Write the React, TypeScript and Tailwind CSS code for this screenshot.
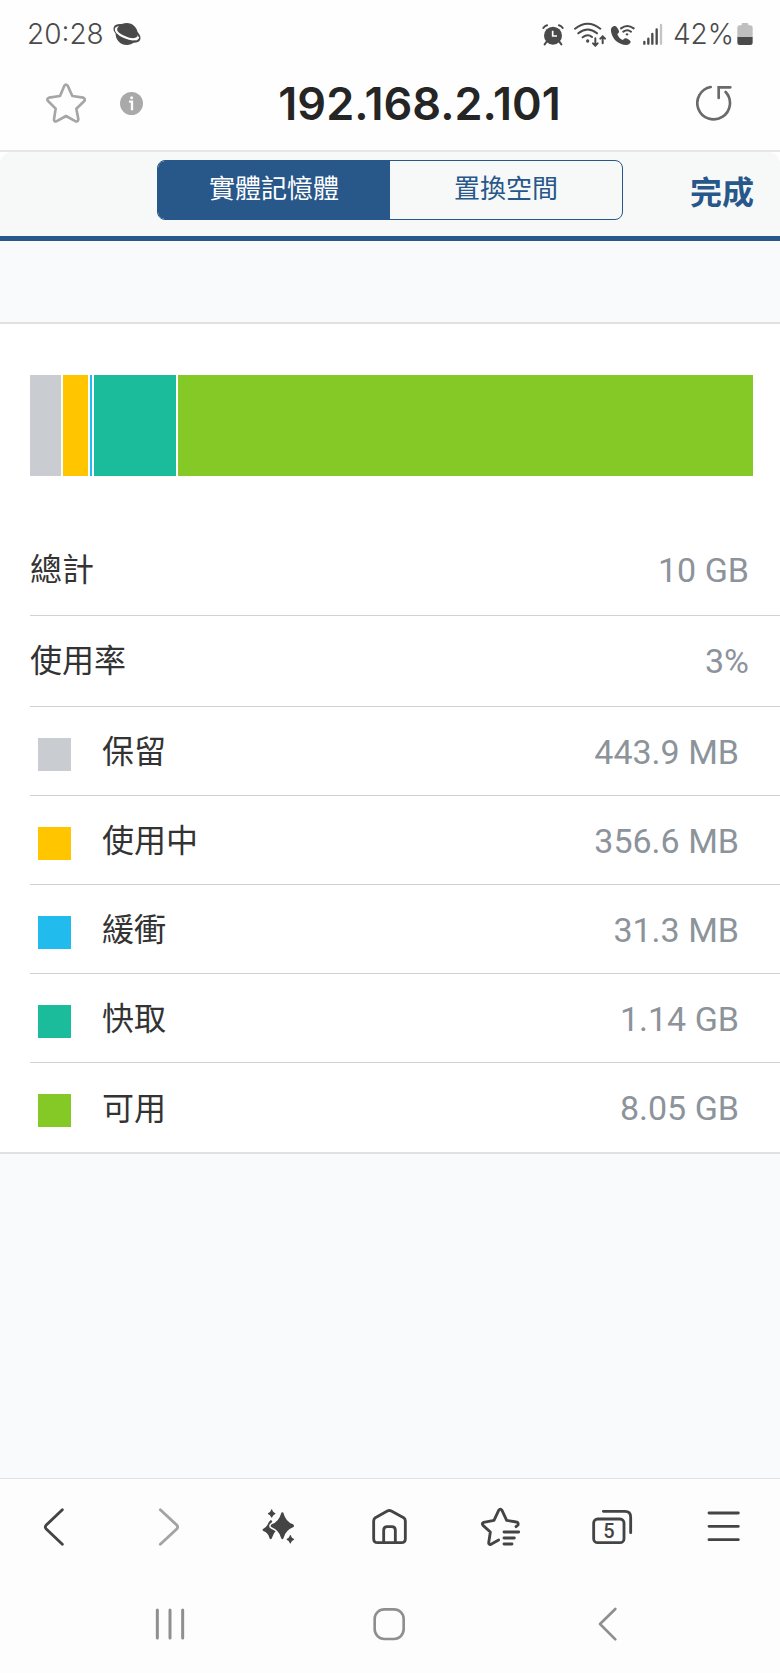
import { useState } from "react";
import type { ReactNode } from "react";

const memory = [
  { label: "保留", value: "443.9 MB", mb: 443.9, color: "bg-[#c9ccd1]" },
  { label: "使用中", value: "356.6 MB", mb: 356.6, color: "bg-[#ffc600]" },
  { label: "緩衝", value: "31.3 MB", mb: 31.3, color: "bg-[#22bbee]" },
  { label: "快取", value: "1.14 GB", mb: 1167, color: "bg-[#1abc9c]" },
  { label: "可用", value: "8.05 GB", mb: 8243, color: "bg-[#84c926]" },
];

const tabs = ["實體記憶體", "置換空間"];

function StatusBar() {
  return (
    <div className="flex h-[68px] items-center pr-[27px] pl-[27px] text-[28px] text-[#4a4a4a]">
      <span className="font-light">20:28</span>
      <svg className="ml-2 h-6 w-[30px]" viewBox="334 66 90 72" fill="none">
        <circle cx="378" cy="102" r="33" fill="#4a4a4a" />
        <ellipse
          cx="379"
          cy="100"
          rx="41"
          ry="19"
          transform="rotate(27 379 100)"
          stroke="#4a4a4a"
          strokeWidth="6"
        />
        <path
          d="M346 86c-3 16 48 42 66 27"
          stroke="#fff"
          strokeWidth="7"
          strokeLinecap="round"
        />
      </svg>
      <div className="ml-auto flex items-center">
        <svg className="h-[23px] w-[22px]" viewBox="66 66 66 69" fill="none">
          <circle cx="99" cy="104" r="27" fill="#4a4a4a" />
          <path
            d="M70 81q4-6 11-8M128 81q-4-6-11-8M80 122l-6 8M118 122l6 8"
            stroke="#4a4a4a"
            strokeWidth="6"
            strokeLinecap="round"
          />
          <path d="M98 89v16h13" stroke="#fff" strokeWidth="5" />
        </svg>
        <svg
          className="ml-2.5 h-[26px] w-[33px]"
          viewBox="162 60 99 78"
          fill="none"
          stroke="#4a4a4a"
          strokeWidth="6"
          strokeLinecap="round"
        >
          <path d="M165 83q38-30 76 0M175 97q28-23 56 0M188 109q15-12 28-1" />
          <circle cx="203" cy="120" r="2" fill="#4a4a4a" />
          <path d="M226 112v21M219 127l7 7 7-7M248 127v-21M241 113l7-7 7 7" />
        </svg>
        <svg
          className="ml-[3px] h-[23px] w-[26px]"
          viewBox="270 66 78 69"
          fill="none"
        >
          <path
            d="M285 75c-9 0-13 7-12 16 3 23 22 41 46 41 7 0 11-4 13-9 1-4-13-13-17-11l-7 5c-8-3-13-9-16-17l5-6c2-4-7-19-12-19Z"
            fill="#4a4a4a"
          />
          <path
            d="M303 82q19-14 38 0M310 92q12-9 23 0"
            stroke="#4a4a4a"
            strokeWidth="6"
            strokeLinecap="round"
          />
          <circle cx="321" cy="100" r="3.5" fill="#4a4a4a" />
        </svg>
        <svg
          className="ml-1.5 h-[23px] w-[21px]"
          viewBox="366 66 63 69"
          stroke="#4a4a4a"
          strokeWidth="7"
          strokeLinecap="round"
        >
          <path d="M373 128v-5M385 128v-15M397 128v-29M410 128v-43" />
          <path d="M423 128v-56" stroke="#c4c4c4" />
        </svg>
        <span className="ml-2.5 font-light">42%</span>
        <svg className="ml-0.5 h-6 w-[17px]" viewBox="648 66 51 72">
          <path
            d="M665 73q0-4 4-4h12q4 0 4 4v3h5q8 0 8 8v28h-46V84q0-8 8-8h5Z"
            fill="#bfbfbf"
          />
          <path d="M652 111h46v17q0 7-7 7h-32q-7 0-7-7Z" fill="#4a4a4a" />
        </svg>
      </div>
    </div>
  );
}

function AddressBar() {
  return (
    <div className="flex h-[82px] items-start pr-12 pl-[46px]">
      <div className="flex h-[70px] w-full items-center">
        <button aria-label="加入書籤">
          <svg className="h-10 w-10" viewBox="137 250 120 120" fill="none">
            <path
              d="M192 258q5-7 10 0l14 31 33 5q7 3 3 10l-24 23 6 32q-1 8-8 6l-29-16-29 16q-7 2-7-6l5-32-23-23q-5-7 3-10l33-5Z"
              stroke="#a6a6a6"
              strokeWidth="8"
              strokeLinejoin="round"
            />
          </svg>
        </button>
        <button aria-label="網站資訊" className="ml-[34px]">
          <svg className="h-[23px] w-[23px]" viewBox="360 276 69 69" fill="none">
            <circle cx="394.500" cy="310.500" r="34.500" fill="#a9a9a9" />
            <circle cx="395" cy="293" r="4.500" fill="#fff" />
            <path d="M387 305h9v26" stroke="#fff" strokeWidth="7" />
          </svg>
        </button>
        <button className="flex-1 pt-0.5 text-center text-[45px] font-semibold text-[#252525]">
          192.168.2.101
        </button>
        <button aria-label="重新整理">
          <svg className="h-9 w-9" viewBox="529 255 108 108" fill="none">
            <path
              d="M573 261A49 49 0 1 0 618 276M597 294v-32h35"
              stroke="#6a6a6a"
              strokeWidth="8"
              strokeLinecap="round"
            />
          </svg>
        </button>
      </div>
    </div>
  );
}

function Header() {
  const [active, setActive] = useState(0);
  return (
    <header className="border-t-2 border-[#e6e6e6] bg-white">
      <div className="grid h-[89px] grid-cols-[1fr_3fr_1fr] items-start rounded-t-xl border-b-[5px] border-[#28578a] bg-[#f7f9f9] pt-2">
        <div className="col-start-2 mx-px grid h-[60px] grid-cols-2 overflow-hidden rounded-lg border border-[#28578a]">
          {tabs.map((tab, i) => (
            <button
              key={tab}
              onClick={() => setActive(i)}
              className={
                active === i
                  ? "bg-[#28578a] pb-0.5 text-[26px] text-white"
                  : "pb-0.5 text-[26px] text-[#28578a]"
              }
            >
              {tab}
            </button>
          ))}
        </div>
        <button className="h-[66px] justify-self-end pr-[26px] text-[32px] font-bold text-[#28578a]">
          完成
        </button>
      </div>
    </header>
  );
}

function MemoryPanel() {
  return (
    <section className="border-y-2 border-[#dfe1e3] bg-white">
      <div className="mt-[51px] mr-[27px] ml-[30px] flex h-[101px] gap-0.5">
        {memory.map((m) => (
          <div
            key={m.label}
            className={`basis-0 ${m.color}`}
            style={{ flexGrow: m.mb }}
          />
        ))}
      </div>
      <dl className="mt-[49px] ml-[30px] text-[32px]">
        <div className="flex h-[91px] items-center justify-between border-b border-[#d0d3d6] pr-[31px]">
          <dt className="text-[#333]">總計</dt>
          <dd className="text-[34px] text-[#8c939b]">10 GB</dd>
        </div>
        <div className="flex h-[91px] items-center justify-between border-b border-[#d0d3d6] pr-[31px]">
          <dt className="text-[#333]">使用率</dt>
          <dd className="text-[34px] text-[#8c939b]">3%</dd>
        </div>
        {memory.map((m) => (
          <div
            key={m.label}
            className="flex h-[89px] items-center border-b border-[#d0d3d6] pt-0.5 pr-[41px] pl-2 last:border-b-0"
          >
            <dt className="flex items-center gap-[31px] text-[#333]">
              <span className={`mt-1 size-[33px] ${m.color}`} />
              {m.label}
            </dt>
            <dd className="ml-auto text-[34px] text-[#8c939b]">{m.value}</dd>
          </div>
        ))}
      </dl>
    </section>
  );
}

function ToolButton({
  label,
  box,
  children,
}: {
  label: string;
  box: string;
  children: ReactNode;
}) {
  return (
    <button aria-label={label} className="flex justify-center">
      <svg
        className="h-[42px] w-[42px]"
        viewBox={box}
        fill="none"
        stroke="#444"
        strokeWidth="8.5"
        strokeLinecap="round"
        strokeLinejoin="round"
      >
        {children}
      </svg>
    </button>
  );
}

function Toolbar() {
  return (
    <nav className="grid h-[96px] grid-cols-7 items-center border-t border-[#dfe1e3] bg-[#fdfdfd]">
      <ToolButton label="上一頁" box="104 48 126 126">
        <path d="M186 59l-49 47q-4 5 0 10l49 47" />
      </ToolButton>
      <ToolButton label="下一頁" box="438 48 126 126">
        <path d="M481 59l50 47q4 5 0 10l-50 47" stroke="#a3a3a3" />
      </ToolButton>
      <ToolButton label="瀏覽助理" box="773 48 126 126">
        <g fill="#444" stroke="none">
          <path d="M811 90q5 1 5 6l-7 8q-1 6 6 11l15 5q-11 8-15 23-4 9-8 0-4-15-18-20-5-4 0-7 12-6 16-19Z" />
          <path
            d="M846 67q3 0 4 4 6 23 28 32 6 5 0 9-22 9-28 31-4 9-8 0-6-22-28-31-6-4 0-9 22-9 28-32 1-4 4-4Z"
            stroke="#fdfdfd"
            strokeWidth="9"
            paintOrder="stroke"
          />
          <path d="M814 58q2 0 2 3 2 6 8 8 3 2 0 4-6 2-8 8-2 5-4 0-2-6-8-8-3-2 0-4 6-2 8-8 0-3 2-3Z" />
          <path d="M870 135q2 0 2 3 2 6 8 8 3 2 0 4-6 2-8 8-2 5-4 0-2-6-8-8-3-2 0-4 6-2 8-8 0-3 2-3Z" />
        </g>
      </ToolButton>
      <ToolButton label="首頁" box="386 48 126 126">
        <path d="M400 93q0-6 5-10l36-20q6-3 12 0l37 20q5 4 5 10v53q0 12-12 12h-71q-12 0-12-12ZM430 157v-36q0-11 11-11h13q11 0 11 11v36" />
      </ToolButton>
      <ToolButton label="書籤" box="720 48 126 126">
        <path d="M828 110l6-5q2-8-5-9l-29-5-14-30q-5-7-10 0l-14 30-31 6q-7 3-2 9l22 20-5 33q1 6 7 4l23-13M792 126h44M792 144h31M792 162h24" />
      </ToolButton>
      <ToolButton label="分頁" box="336 48 126 126">
        <path d="M370 64h65q17 0 17 17v47" />
        <rect x="341" y="87" width="91" height="71" rx="12" />
        <text
          x="387"
          y="143"
          textAnchor="middle"
          fontSize="60"
          fontWeight="500"
          fill="#444"
          stroke="none"
        >
          5
        </text>
      </ToolButton>
      <ToolButton label="選單" box="669 48 126 126">
        <path d="M687 69h88M687 109h88M687 149h88" />
      </ToolButton>
    </nav>
  );
}

function SystemNav() {
  return (
    <nav className="grid h-[99px] grid-cols-3 items-center bg-[#fdfdfd] px-[60px]">
      <button aria-label="最近使用" className="flex justify-center">
        <svg
          className="h-9 w-9"
          viewBox="457 347 108 108"
          stroke="#8f8f8f"
          strokeWidth="9"
          strokeLinecap="round"
        >
          <path d="M473 359v84M511 359v84M549 359v84" />
        </svg>
      </button>
      <button aria-label="主畫面" className="flex justify-center">
        <svg
          className="h-9 w-9"
          viewBox="394 347 108 108"
          fill="none"
          stroke="#8f8f8f"
          strokeWidth="8"
        >
          <rect x="402" y="357" width="87" height="89" rx="29" />
        </svg>
      </button>
      <button aria-label="返回" className="flex justify-center">
        <svg
          className="h-9 w-9"
          viewBox="336 347 108 108"
          fill="none"
          stroke="#8f8f8f"
          strokeWidth="8"
          strokeLinecap="round"
          strokeLinejoin="round"
        >
          <path d="M406 356l-46 45 46 46" />
        </svg>
      </button>
    </nav>
  );
}

export default function App() {
  return (
    <div className="flex min-h-screen flex-col bg-[#f9fafc] font-[Roboto,'Noto_Sans_CJK_TC',sans-serif]">
      <div className="bg-[#fefefe] font-[Inter,'Noto_Sans_CJK_TC',sans-serif]">
        <StatusBar />
        <AddressBar />
      </div>
      <Header />
      <main className="flex-1 pt-[81px]">
        <MemoryPanel />
      </main>
      <Toolbar />
      <SystemNav />
    </div>
  );
}
